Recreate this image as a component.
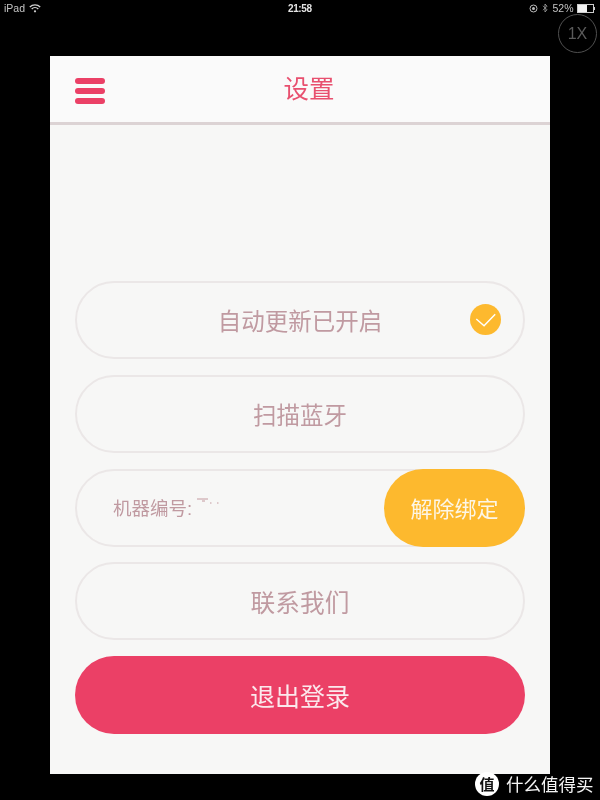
<script>
  const rows = ['自动更新已开启', '扫描蓝牙'];
</script>

<div class="screen">
  <div class="status">
    <div class="left">
      <span>iPad</span>
      <svg width="12" height="9" viewBox="0 0 12 9" fill="none" stroke="#d0d0d0" stroke-width="1.400">
        <path d="M0.800 3a7.500 7.500 0 0 1 10.400 0M2.700 5a4.700 4.700 0 0 1 6.600 0"/>
        <circle cx="6" cy="7.300" r="1.100" fill="#d0d0d0" stroke="none"/>
      </svg>
    </div>
    <span class="time">21:58</span>
    <div class="right">
      <svg width="9" height="9" viewBox="0 0 9 9" fill="none" stroke="#bbb" stroke-width="1">
        <circle cx="4.500" cy="4.500" r="3.500"/>
        <circle cx="4.500" cy="4.500" r="1.500" fill="#bbb" stroke="none"/>
      </svg>
      <svg width="6" height="10" viewBox="0 0 6 10" fill="none" stroke="#999" stroke-width="0.900">
        <path d="M1 2.800 5 6.800 3 9V1l2 2.200L1 7.200"/>
      </svg>
      <span>52%</span>
      <div class="battery"><div class="level"></div></div>
      <div class="nub"></div>
    </div>
  </div>

  <div class="zoom-row"><div class="zoom-badge">1X</div></div>

  <main class="panel">
    <header class="bar">
      <div class="menu" aria-label="菜单"><i></i><i></i><i></i></div>
      <h1>设置</h1>
    </header>

    <div class="list">
      <div class="pill">
        <span>{rows[0]}</span>
        <svg class="check" width="31" height="31" viewBox="0 0 32 32">
          <circle cx="16" cy="16" r="16" fill="#fdb92e"/>
          <path d="M6.500 15.500 14.500 22.500 26 10.500" fill="none" stroke="#fff" stroke-width="1.500"/>
        </svg>
      </div>
      <div class="pill"><span>{rows[1]}</span></div>
      <div class="pill machine">
        <span class="serial">机器编号: </span>
        <span class="redacted">
          <svg width="22" height="9" viewBox="0 0 22 9">
            <path d="M0 1h11M5 3h3M13 5h1.500M20 5h1.500" stroke="#c49aa0" stroke-width="1"/>
          </svg>
        </span>
        <button class="unbind">解除绑定</button>
      </div>
      <div class="pill contact"><span>联系我们</span></div>
      <button class="logout">退出登录</button>
    </div>
  </main>

  <footer class="mark">
    <div class="logo">值</div>
    <span>什么值得买</span>
  </footer>
</div>

<style>
  :global(body) {
    margin: 0;
    background: #000;
  }

  .screen {
    width: 600px;
    height: 800px;
    background: #000;
    display: flex;
    flex-direction: column;
    overflow: hidden;
    position: relative;
    font-family: "Liberation Sans", "Noto Sans CJK SC", sans-serif;
    filter: blur(0.35px);
  }

  .status {
    height: 16px;
    padding: 0 5px 0 4px;
    display: flex;
    align-items: center;
    justify-content: space-between;
    color: #c4c4c4;
    font-size: 10.500px;
    position: relative;
  }

  .left, .right {
    display: flex;
    align-items: center;
    gap: 4px;
  }

  .time {
    position: absolute;
    left: 288px;
    color: #e4e4e4;
    font-size: 10px;
    font-weight: 700;
    letter-spacing: -0.400px;
  }

  .battery {
    width: 15px;
    height: 7px;
    border: 1px solid #ccc;
    margin-left: -1px;
  }

  .level {
    width: 9px;
    height: 7px;
    background: #f2f2f2;
  }

  .nub {
    width: 1.500px;
    height: 3px;
    background: #ccc;
    margin-left: -4px;
  }

  .zoom-row {
    height: 40px;
    display: flex;
    justify-content: flex-end;
    padding-right: 3px;
  }

  .zoom-badge {
    width: 39px;
    height: 39px;
    margin-top: -2px;
    box-sizing: border-box;
    border: 1.500px solid #505050;
    border-radius: 50%;
    color: #5a5a5a;
    font-size: 16px;
    display: flex;
    align-items: center;
    justify-content: center;
  }

  .panel {
    width: 500px;
    height: 718px;
    margin-left: 50px;
    background: #f7f7f6;
    display: flex;
    flex-direction: column;
  }

  .bar {
    height: 66px;
    padding-left: 18px;
    background: #fafafa;
    border-bottom: 3px solid #dcd3d4;
    display: flex;
    align-items: center;
    justify-content: center;
    position: relative;
    flex: none;
  }

  h1 {
    margin: 0 0 6px;
    font-size: 25.500px;
    font-weight: 400;
    color: #e8506f;
  }

  .menu {
    position: absolute;
    left: 25px;
    top: 22px;
    display: flex;
    flex-direction: column;
    gap: 4px;
  }

  .menu i {
    display: block;
    width: 30px;
    height: 6px;
    border-radius: 3px;
    background: #eb4066;
  }

  .list {
    margin-top: 156px;
    padding: 0 25px;
    display: flex;
    flex-direction: column;
    gap: 15.750px;
  }

  .pill {
    height: 78px;
    box-sizing: border-box;
    border: 2px solid #ebe7e7;
    border-radius: 39px;
    display: flex;
    align-items: center;
    justify-content: center;
    position: relative;
    color: #c09aa1;
    font-size: 23.500px;
    background: #f7f7f6;
  }

  .contact {
    font-size: 24.700px;
  }

  .check {
    position: absolute;
    right: 22px;
    top: 21px;
  }

  .machine {
    justify-content: flex-start;
    padding-left: 36px;
  }

  .serial {
    font-size: 18.500px;
    margin-bottom: 2px;
  }

  .redacted {
    display: flex;
    margin-left: 5px;
    margin-bottom: 10px;
  }

  .unbind {
    position: absolute;
    right: -2px;
    top: -2px;
    width: 141px;
    height: 78px;
    border: 0;
    border-radius: 39px;
    background: #fdb92e;
    color: #fdf6e6;
    font: inherit;
    font-size: 22px;
    padding: 0 0 2px;
  }

  .logout {
    height: 78px;
    border: 0;
    border-radius: 39px;
    background: #eb4066;
    color: #fbe9ed;
    font: inherit;
    font-size: 25px;
    padding: 0;
  }

  .mark {
    position: absolute;
    left: 475px;
    top: 771px;
    display: flex;
    align-items: center;
    gap: 7px;
    color: #f4f4f4;
    font-size: 17.500px;
  }

  .logo {
    width: 24px;
    height: 24px;
    border-radius: 50%;
    background: #fff;
    color: #111;
    font-size: 15px;
    font-weight: 700;
    display: flex;
    align-items: center;
    justify-content: center;
  }
</style>
